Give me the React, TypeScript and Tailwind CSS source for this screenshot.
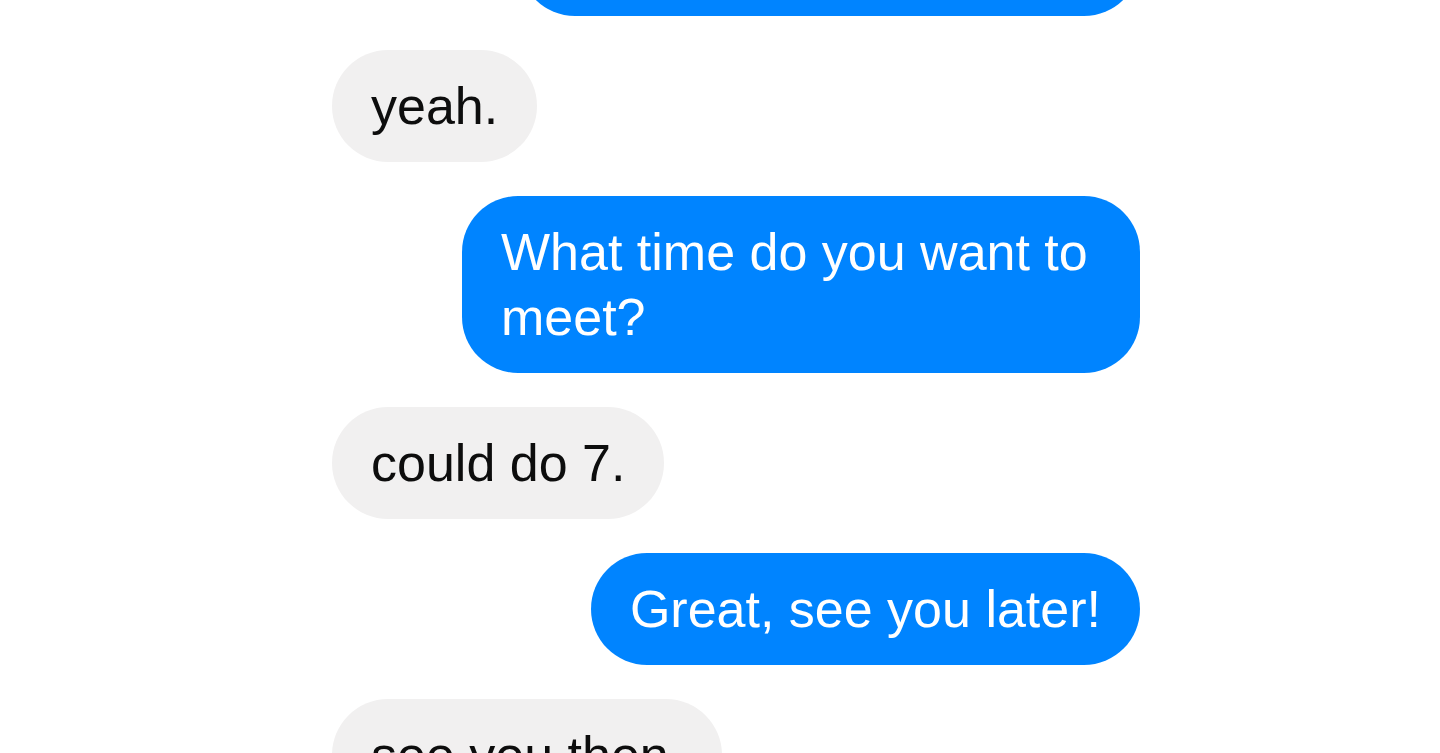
type Message = { from: 'me' | 'them'; text: string }

const messages: Message[] = [
  { from: 'me', text: 'Are we still on for later?' },
  { from: 'them', text: 'yeah.' },
  { from: 'me', text: 'What time do you want to meet?' },
  { from: 'them', text: 'could do 7.' },
  { from: 'me', text: 'Great, see you later!' },
  { from: 'them', text: 'see you then.' },
]

function Bubble({ from, text }: Message) {
  const mine = from === 'me'
  return (
    <div
      className={`max-w-[678px] rounded-[56px] px-[39px] py-[23.5px] text-[52px] leading-[65px] ${
        mine ? 'self-end bg-[#0084ff] text-white' : 'self-start bg-[#f1f0f0] text-[#0d0d0d]'
      }`}
    >
      {text}
    </div>
  )
}

export default function App() {
  return (
    <div className="h-screen overflow-hidden bg-white font-['Liberation_Sans',Arial,sans-serif]">
      <div className="ml-[332px] mt-[-96px] flex w-[808px] flex-col gap-[34px]">
        {messages.map((m, i) => (
          <Bubble key={i} {...m} />
        ))}
      </div>
    </div>
  )
}
